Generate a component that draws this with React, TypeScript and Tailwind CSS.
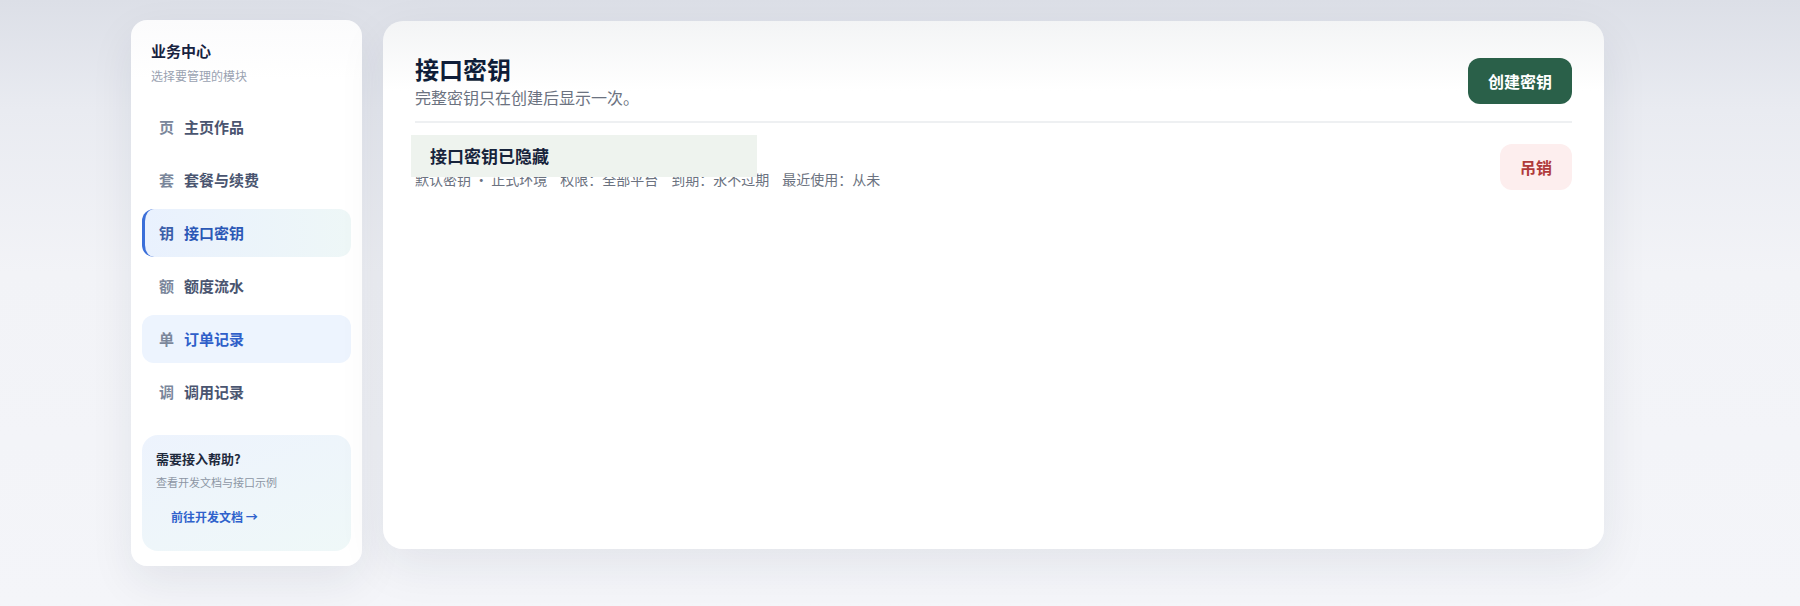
const navItems = [
  { icon: '页', label: '主页作品', state: 'idle' },
  { icon: '套', label: '套餐与续费', state: 'idle' },
  { icon: '钥', label: '接口密钥', state: 'active' },
  { icon: '额', label: '额度流水', state: 'idle' },
  { icon: '单', label: '订单记录', state: 'hover' },
  { icon: '调', label: '调用记录', state: 'idle' },
]

const keyMeta = ['默认密钥 · 正式环境', '权限：全部平台', '到期：永不过期', '最近使用：从未']

function Sidebar() {
  return (
    <aside className="w-[231px] shrink-0 rounded-2xl bg-[linear-gradient(180deg,#fbfbfc,#ffffff_60px)] shadow-[0_16px_44px_rgba(30,41,59,0.08)] pt-[20px] pb-[15px] px-[11px]">
      {/* Header */}
      <div className="px-[9px]">
        <h2 className="text-[15px] leading-[22px] font-bold text-[#172240]">业务中心</h2>
        <p className="mt-[6px] text-[12px] leading-4 text-[#9aa2b1]">选择要管理的模块</p>
      </div>

      {/* Nav */}
      <nav className="mt-[19px] flex flex-col gap-[5px]">
        {navItems.map((item) => {
          const active = item.state === 'active'
          const hover = item.state === 'hover'
          return (
            <div
              key={item.label}
              className={
                'h-12 flex items-center gap-[10px] rounded-xl border-l-[3px] pl-[14px] ' +
                (active
                  ? 'border-[#3b6fd9] bg-[linear-gradient(90deg,#e9f1fe,#eef7f7)]'
                  : hover
                    ? 'border-transparent bg-[#edf4fe]'
                    : 'border-transparent')
              }
            >
              <span className={'text-[15px] font-semibold ' + (active ? 'text-[#3a5ea9]' : 'text-[#7b879b]')}>
                {item.icon}
              </span>
              <span
                className={
                  'text-[15px] font-bold ' + (active ? 'text-[#2b58b6]' : hover ? 'text-[#2f5fc9]' : 'text-[#4a5570]')
                }
              >
                {item.label}
              </span>
            </div>
          )
        })}
      </nav>

      {/* Help */}
      <div className="mt-[19px] h-[116px] rounded-2xl bg-[linear-gradient(160deg,#edf3fd,#eff8f8)] pt-[14px] px-[14px]">
        <h3 className="text-[13px] leading-5 font-bold text-[#1f2a3d]">需要接入帮助?</h3>
        <p className="mt-[5px] text-[11px] leading-4 text-[#8c95a4]">查看开发文档与接口示例</p>
        <button className="mt-[11px] h-8 px-[15px] text-[12px] font-bold text-[#2f62cc]">前往开发文档&nbsp;→</button>
      </div>
    </aside>
  )
}

function KeysPanel() {
  return (
    <main className="w-[1221px] h-[528px] mt-px rounded-[20px] bg-[linear-gradient(180deg,#f3f4f5,#ffffff_70px)] shadow-[0_16px_48px_rgba(30,41,59,0.08)] pt-8 px-8">
      {/* Header */}
      <div className="flex items-center justify-between border-b-2 border-[#eef0f2] pb-3">
        <div>
          <h1 className="text-[24px] leading-8 font-bold text-[#0f1d38]">接口密钥</h1>
          <p className="text-[16px] leading-6 text-[#6b7280]">完整密钥只在创建后显示一次。</p>
        </div>
        <button className="h-[46px] px-5 rounded-xl bg-[#2a6049] text-[16px] font-bold text-white">创建密钥</button>
      </div>

      {/* Key row */}
      <div className="mt-3 flex items-start justify-between">
        <div>
          <div className="relative -ml-1 w-[346px] h-[42px] bg-[#eef3ee] flex items-center pl-[19px]">
            <span className="text-[17px] font-bold text-[#17233b]">接口密钥已隐藏</span>
          </div>
          <div className="-mt-[8px] flex gap-[13px] text-[14px] leading-5 text-[#6b7280]">
            {keyMeta.map((m) => (
              <span key={m}>{m}</span>
            ))}
          </div>
        </div>
        <button className="mt-[9px] h-[46px] px-5 rounded-xl bg-[#fdeeee] text-[16px] font-bold text-[#b03a3a]">吊销</button>
      </div>
    </main>
  )
}

export default function App() {
  return (
    <div
      className="h-[606px] w-full overflow-hidden bg-[linear-gradient(180deg,#dcdfe7_0%,#e9ebf1_18%,#f2f3f7_45%,#f4f5f9_100%)]"
      style={{ fontFamily: '"Noto Sans CJK SC", "Noto Sans", sans-serif' }}
    >
      <div className="ml-[131px] pt-5 flex items-start gap-[21px]">
        <Sidebar />
        <KeysPanel />
      </div>
    </div>
  )
}
